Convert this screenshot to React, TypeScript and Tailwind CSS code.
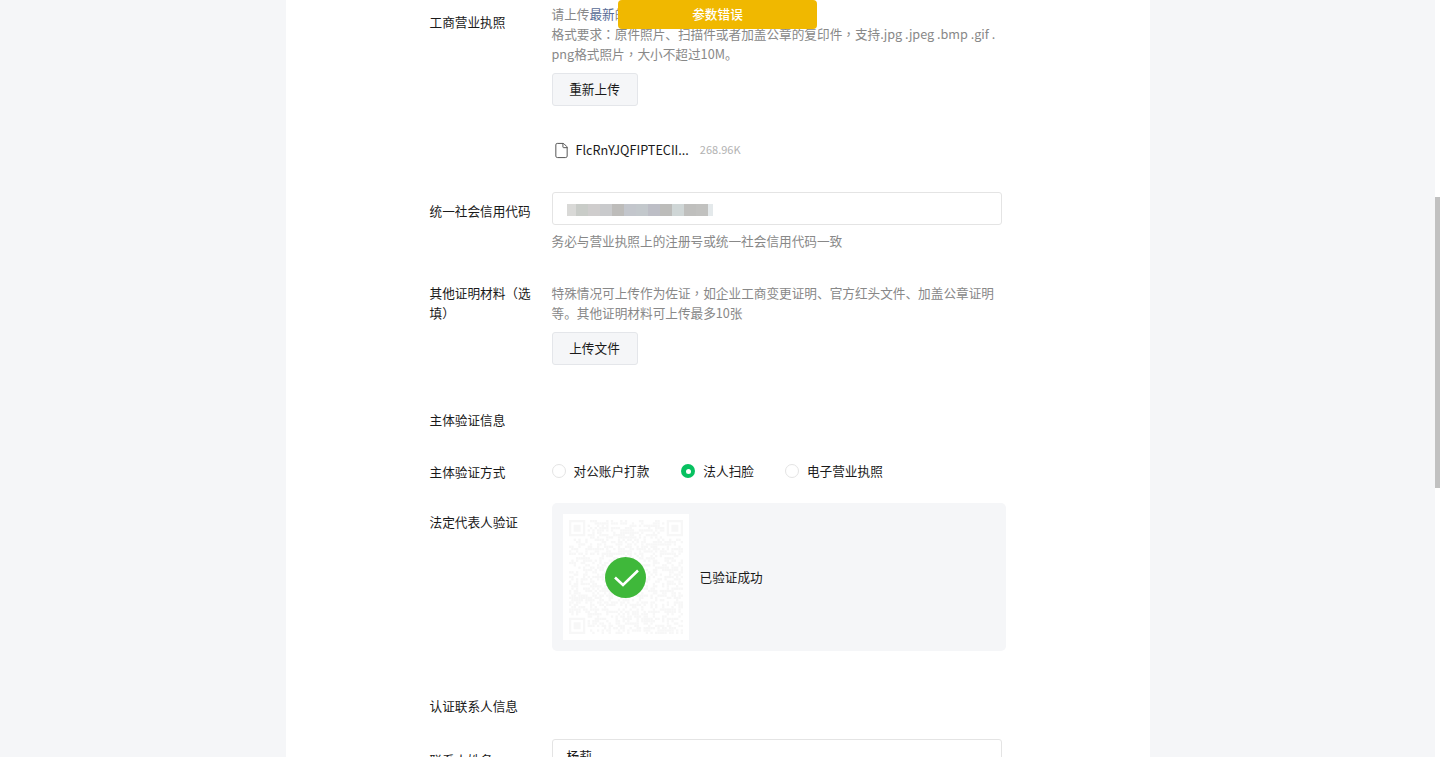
import React from 'react';
import { File } from 'lucide-react';

const FONT = { fontFamily: '"Noto Sans CJK SC", "Liberation Sans", sans-serif' };

const blurBlocks = [
    'w-[9px] bg-[#d9d9d7]',
    'w-[12px] bg-[#c9ccc8]',
    'w-[12px] bg-[#cfcdcd]',
    'w-[12px] bg-[#c9cacc]',
    'w-[12px] bg-[#bdbcba]',
    'w-[12px] bg-[#c3c6cc]',
    'w-[12px] bg-[#c3c8cc]',
    'w-[12px] bg-[#bdbec6]',
    'w-[12px] bg-[#bcbcba]',
    'w-[12px] bg-[#cfd6d6]',
    'w-[12px] bg-[#bfbfbd]',
    'w-[12px] bg-[#c1c1bf]',
    'w-[5px] bg-[#e4e9eb]',
];

// the reference sets these marks in the middle of their box, as the TC cut does
const Mid: React.FC<{ children: React.ReactNode }> = ({ children }) => (
    <span className="font-['Noto_Sans_CJK_TC']">{children}</span>
);

const FormRow: React.FC<{ label: string; labelClass?: string; className?: string; children: React.ReactNode }> = ({
    label,
    labelClass = 'mt-[9px]',
    className = '',
    children,
}) => (
    <div className={`flex ${className}`}>
        <div className={`w-[122px] shrink-0 pr-3 text-[12.65px] leading-5 text-[#1a1a1a] ${labelClass}`}>{label}</div>
        <div className="w-[454px]">{children}</div>
    </div>
);

const UploadButton: React.FC<{ text: string; className?: string }> = ({ text, className = '' }) => (
    <button className={`block w-[86px] h-[33px] pb-[2px] rounded-[3px] border border-[#e4e6ea] bg-[#f5f6f8] text-[12.65px] text-[#1a1a1a] ${className}`}>
        {text}
    </button>
);

const TextBox: React.FC<{ children?: React.ReactNode }> = ({ children }) => (
    <div className="w-[450px] h-[33px] rounded-[3px] border border-[#e4e4e4] bg-white px-[14px] flex items-center text-[12.65px] text-[#1a1a1a]">
        {children}
    </div>
);

const Radio: React.FC<{ text: string; checked?: boolean; className?: string }> = ({ text, checked, className = '' }) => (
    <label className={`flex items-center gap-2 text-[12.65px] leading-5 text-[#1a1a1a] ${className}`}>
        {checked ? (
            <span className="w-[14px] h-[14px] rounded-full bg-[#07c160] flex items-center justify-center">
                <span className="w-[5px] h-[5px] rounded-full bg-white" />
            </span>
        ) : (
            <span className="w-[14px] h-[14px] rounded-full border border-[#e4e4e4] bg-white" />
        )}
        {text}
    </label>
);

// 49 module code, seeded so it draws the same every time
const QrCode: React.FC = () => {
    const size = 49;
    const cells: React.ReactNode[] = [];
    let seed = 20417;
    const inFinder = (x: number, y: number) =>
        (x < 8 && y < 8) || (x >= size - 8 && y < 8) || (x < 8 && y >= size - 8);
    for (let y = 0; y < size; y++) {
        for (let x = 0; x < size; x++) {
            seed = (seed * 1103515245 + 12345) & 0x7fffffff;
            if (!inFinder(x, y) && (seed >> 16) % 2 === 0) {
                cells.push(<rect key={`${x}-${y}`} x={x} y={y} width={1} height={1} />);
            }
        }
    }
    const finders = [
        [0, 0],
        [42, 0],
        [0, 42],
    ];
    return (
        <svg viewBox="0 0 49 49" className="w-[114px] h-[114px] fill-[#f7f7f7]">
            {cells}
            {finders.map(([x, y]) => (
                <path key={`${x}-${y}`} fillRule="evenodd" d={`M${x} ${y}h7v7h-7zM${x + 1} ${y + 1}v5h5v-5zM${x + 2} ${y + 2}h3v3h-3z`} />
            ))}
        </svg>
    );
};

const App: React.FC = () => {
    return (
        <div className="relative flex h-[757px] overflow-hidden bg-[#f5f6f8]" style={FONT}>
            <div className="flex-1 min-w-0">
                <div className="mx-auto w-[864px] h-full bg-white pl-[144px] pt-1">
                    <FormRow label="工商营业执照" labelClass="mt-[8px]">
                        <p className="text-[12.65px] leading-5 text-[#888888]">
                            请上传<span className="text-[#576b95]">最新</span>的营业执照
                            <br />
                            格式要求<Mid>：</Mid>原件照片、扫描件或者加盖公章的复印件<Mid>，</Mid>支持.jpg .jpeg .bmp .gif .
                            <br />
                            png格式照片<Mid>，</Mid>大小不超过10M。
                        </p>
                        <UploadButton text="重新上传" className="mt-[9px]" />
                        <div className="mt-[34px] flex h-5 items-center text-[12.65px]">
                            <File size={17} strokeWidth={1.4} className="ml-[1px] text-[#555555]" />
                            <span className="ml-[6px] -translate-y-px text-[#1a1a1a]">FlcRnYJQFIPTECII...</span>
                            <span className="ml-[11px] -translate-y-px text-[11px] text-[#b2b2b2]">268.96K</span>
                        </div>
                    </FormRow>

                    <FormRow label="统一社会信用代码" className="mt-8">
                        <TextBox>
                            <div className="flex h-[12px] mt-[3px]">
                                {blurBlocks.map((block) => (
                                    <span key={block} className={block} />
                                ))}
                            </div>
                        </TextBox>
                        <p className="mt-[6px] mb-px text-[12.65px] leading-5 text-[#888888]">务必与营业执照上的注册号或统一社会信用代码一致</p>
                    </FormRow>

                    <FormRow label="其他证明材料（选填）" labelClass="" className="mt-[31px]">
                        <p className="w-[450px] text-[12.65px] leading-5 text-[#888888]">
                            特殊情况可上传作为佐证<Mid>，</Mid>如企业工商变更证明、官方红头文件、加盖公章证明等。其他证明材料可上传最多10张
                        </p>
                        <UploadButton text="上传文件" className="mt-[9px]" />
                    </FormRow>

                    <h3 className="mt-[45px] text-[12.65px] font-normal leading-5 text-[#1a1a1a]">主体验证信息</h3>

                    <FormRow label="主体验证方式" labelClass="mt-[1px]" className="mt-[31px]">
                        <div className="flex">
                            <Radio text="对公账户打款" />
                            <Radio text="法人扫脸" checked className="ml-[32px]" />
                            <Radio text="电子营业执照" className="ml-[31px]" />
                        </div>
                    </FormRow>

                    <FormRow label="法定代表人验证" className="mt-[21px]">
                        <div className="flex h-[148px] items-center rounded-[5px] bg-[#f5f6f8] pl-[11px]">
                            <div className="relative flex h-[126px] w-[126px] items-center justify-center bg-white">
                                <QrCode />
                                <svg viewBox="0 0 41 41" className="absolute left-[42px] top-[43px] h-[41px] w-[41px]">
                                    <circle cx="20.5" cy="20.5" r="20.5" fill="#3fb83a" />
                                    <path d="M10 20.5l8 7.5L33 13.5" fill="none" stroke="#ffffff" strokeWidth="2.6" />
                                </svg>
                            </div>
                            <span className="ml-[11px] -translate-y-px text-[12.65px] text-[#1a1a1a]">已验证成功</span>
                        </div>
                    </FormRow>

                    <h3 className="mt-[45px] text-[12.65px] font-normal leading-5 text-[#1a1a1a]">认证联系人信息</h3>

                    <FormRow label="联系人姓名" labelClass="mt-[11px]" className="mt-[23px]">
                        <TextBox>杨莉</TextBox>
                    </FormRow>
                </div>
            </div>

            <div className="w-[5px] shrink-0 bg-white pt-[197px]">
                <div className="h-[291px] bg-[#c1c1c1]" />
            </div>

            <div className="absolute left-[618px] top-0 flex h-[29px] w-[199px] items-center justify-center rounded-[4px] bg-[#f0b800] pb-[2px] text-[12.65px] font-medium text-white">
                参数错误
            </div>
        </div>
    );
};

export default App;
